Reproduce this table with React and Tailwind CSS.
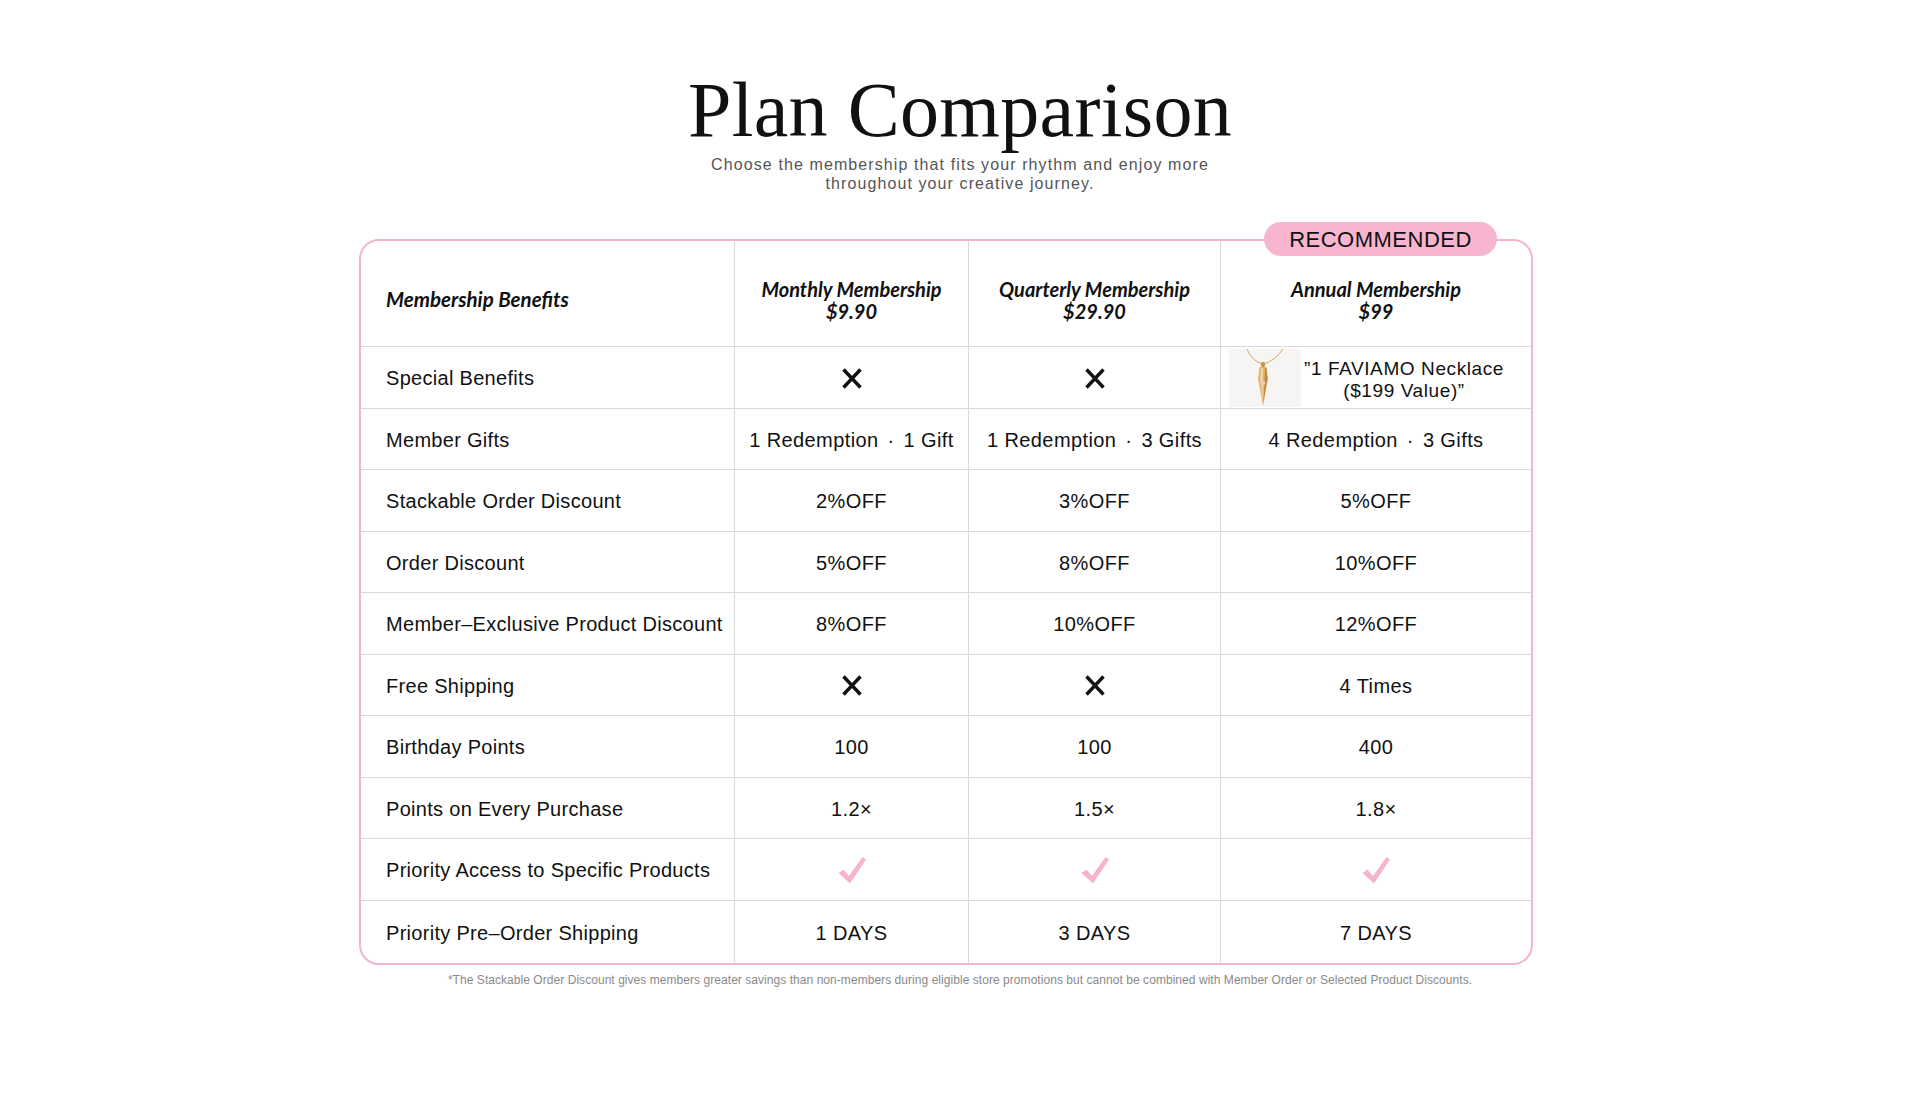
import React from "react";

const XMark = () => (
  <svg width="22" height="23" viewBox="0 0 22 23" aria-hidden="true">
    <path d="M2.5 2.5 L19.5 20.5 M19.5 2.5 L2.5 20.5" stroke="#111" strokeWidth="3.4" fill="none" />
  </svg>
);

const Check = () => (
  <svg width="28" height="28" viewBox="0 0 28 28" aria-hidden="true">
    <path d="M0.5 17 L5.5 13.5 L11 20 L24.5 1 L28 3.5 L12 27.5 Z" fill="#f7b3cd" />
  </svg>
);

const Necklace = () => (
  <svg width="72" height="58" viewBox="0 0 72 58" aria-hidden="true" className="shrink-0">
    <rect x="0" y="0" width="72" height="58" fill="#f7f5f3" />
    <path d="M18 0 Q22 11 33 15" stroke="#d7a45c" strokeWidth="1" fill="none" />
    <path d="M54 0 Q47 11 35 15" stroke="#d7a45c" strokeWidth="1" fill="none" />
    <rect x="32" y="13" width="4" height="5" rx="1.5" fill="#c99245" />
    <path d="M30.5 18 L37.5 18 L39 30 L37 40 L34 57 L31 40 L29 30 Z" fill="#e2b46f" />
    <path d="M32 19 L34 19 L34 55 L32.5 40 L31 30 Z" fill="#f3d39c" />
    <path d="M36 19 L37.5 19 L38.5 30 L36.5 40 L34.5 54 Z" fill="#c18a3e" />
    <circle cx="34" cy="34" r="2.2" fill="#f4c6d6" />
  </svg>
);

const rows = [
  ["Special Benefits", "x", "x", "necklace"],
  ["Member Gifts", "1 Redemption · 1 Gift", "1 Redemption · 3 Gifts", "4 Redemption · 3 Gifts"],
  ["Stackable Order Discount", "2%OFF", "3%OFF", "5%OFF"],
  ["Order Discount", "5%OFF", "8%OFF", "10%OFF"],
  ["Member–Exclusive Product Discount", "8%OFF", "10%OFF", "12%OFF"],
  ["Free Shipping", "x", "x", "4 Times"],
  ["Birthday Points", "100", "100", "400"],
  ["Points on Every Purchase", "1.2×", "1.5×", "1.8×"],
  ["Priority Access to Specific Products", "check", "check", "check"],
  ["Priority Pre–Order Shipping", "1 DAYS", "3 DAYS", "7 DAYS"],
];

const body = { fontFamily: '"Liberation Sans", Arial, sans-serif' };
const head = { fontFamily: 'Lato, "Open Sans", sans-serif' };

function Value({ v }) {
  if (v === "x") return <XMark />;
  if (v === "check") return <Check />;
  if (v === "necklace")
    return (
      <div className="flex h-full w-full items-center pl-[8px] pr-[24px]">
        <Necklace />
        <div className="flex-1 pt-[3px] text-center text-[19px] leading-[22px] tracking-[0.6px] text-[#111]">
          <div>”1 FAVIAMO Necklace</div>
          <div>($199 Value)”</div>
        </div>
      </div>
    );
  if (v.includes(" · ")) {
    const [a, b] = v.split(" · ");
    return (
      <span className="whitespace-nowrap text-[20px] tracking-[0.4px] text-[#111]">
        {a}
        <span className="mx-[9px]">·</span>
        {b}
      </span>
    );
  }
  return <span className="whitespace-nowrap text-[20px] tracking-[0.4px] text-[#111]">{v}</span>;
}

export default function App() {
  return (
    <div className="min-h-[1098px] w-full bg-white" style={body}>
      <div className="ml-[359px] w-[1174px]">
        <div className="flex flex-col items-center pl-[28px] pt-[71px]">
          <h1
            className="text-[78px] leading-[78px] font-normal tracking-[0.3px] text-[#111]"
            style={{ fontFamily: '"Liberation Serif", "Times New Roman", serif' }}
          >
            Plan Comparison
          </h1>
          <p className="mt-[6px] text-center text-[16px] leading-[19px] tracking-[1.1px] text-[#555]">
            Choose the membership that fits your rhythm and enjoy more
            <br />
            throughout your creative journey.
          </p>
        </div>

        <div className="relative mt-[46px] rounded-[20px] border-2 border-[#f4b6cc]">
          <div className="absolute -top-[19px] right-[34px] flex h-[34px] w-[233px] items-center justify-center rounded-full bg-[#f8b5cf] text-[22px] tracking-[0.5px] text-[#111]">
            RECOMMENDED
          </div>

          <div className="grid grid-cols-[373px_234px_252px_311px]">
            <div className="flex h-[105px] items-center pl-[25px] pt-[12px] text-[20.5px] font-bold italic text-[#111]" style={head}>
              Membership Benefits
            </div>
            {[
              ["Monthly Membership", "$9.90"],
              ["Quarterly Membership", "$29.90"],
              ["Annual Membership", "$99"],
            ].map(([t, p]) => (
              <div
                key={t}
                className="flex h-[105px] flex-col items-center justify-center border-l border-[#d9d9d9] pt-[12px] text-[20px] font-bold italic leading-[22px] text-[#111]"
                style={head}
              >
                <div>{t}</div>
                <div>{p}</div>
              </div>
            ))}

            {rows.map((r, i) => {
              const h = i === rows.length - 1 ? "h-[63px]" : "h-[61.5px]";
              return (
                <React.Fragment key={r[0]}>
                  <div className={`${h} flex items-center whitespace-nowrap border-t border-[#d9d9d9] pl-[25px] pt-[2px] text-[20px] tracking-[0.3px] text-[#111]`}>
                    {r[0]}
                  </div>
                  {r.slice(1).map((v, j) => (
                    <div key={j} className={`${h} flex items-center justify-center border-l border-t border-[#d9d9d9] pt-[2px]`}>
                      <Value v={v} />
                    </div>
                  ))}
                </React.Fragment>
              );
            })}
          </div>
        </div>

        <p className="mt-[7px] pl-[28px] text-center text-[12px] leading-[16px] tracking-[0.05px] text-[#8a8a8a]">
          *The Stackable Order Discount gives members greater savings than non-members during eligible store promotions but cannot be combined with Member Order or Selected Product Discounts.
        </p>
      </div>
    </div>
  );
}
